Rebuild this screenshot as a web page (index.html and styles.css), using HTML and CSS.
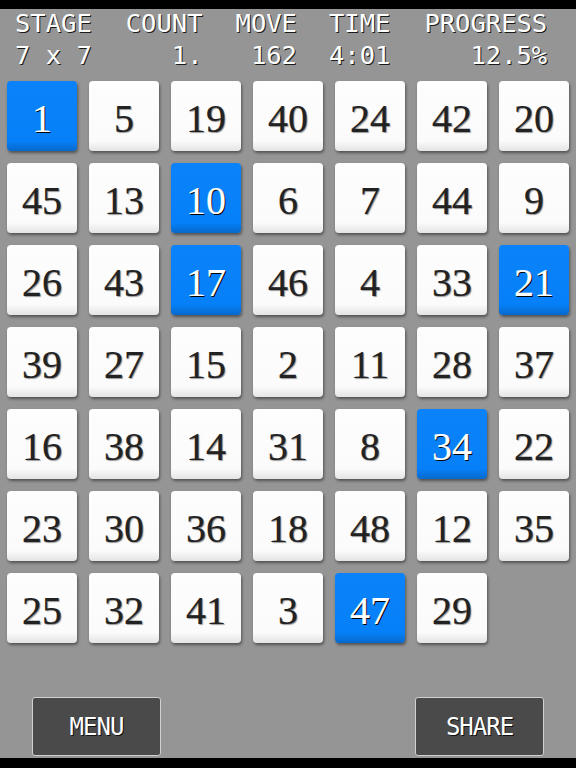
FILE: index.html
```html
<!DOCTYPE html>
<html>
<head>
<meta charset="utf-8">
<link rel="stylesheet" href="styles.css">
</head>
<body>
<div class="screen">
  <div class="topbar"></div>
  <div class="stats">
    <div class="stat"><div class="label">STAGE</div><div class="value left">7 x 7</div></div>
    <div class="stat c2"><div class="label">COUNT</div><div class="value">1.</div></div>
    <div class="stat c3"><div class="label">MOVE</div><div class="value">162</div></div>
    <div class="stat c4"><div class="label">TIME</div><div class="value">4:01</div></div>
    <div class="stat c5"><div class="label">PROGRESS</div><div class="value">12.5%</div></div>
  </div>
  <div class="board">
    <div class="tile on">1</div><div class="tile">5</div><div class="tile">19</div><div class="tile">40</div><div class="tile">24</div><div class="tile">42</div><div class="tile">20</div>
    <div class="tile">45</div><div class="tile">13</div><div class="tile on">10</div><div class="tile">6</div><div class="tile">7</div><div class="tile">44</div><div class="tile">9</div>
    <div class="tile">26</div><div class="tile">43</div><div class="tile on">17</div><div class="tile">46</div><div class="tile">4</div><div class="tile">33</div><div class="tile on">21</div>
    <div class="tile">39</div><div class="tile">27</div><div class="tile">15</div><div class="tile">2</div><div class="tile">11</div><div class="tile">28</div><div class="tile">37</div>
    <div class="tile">16</div><div class="tile">38</div><div class="tile">14</div><div class="tile">31</div><div class="tile">8</div><div class="tile on">34</div><div class="tile">22</div>
    <div class="tile">23</div><div class="tile">30</div><div class="tile">36</div><div class="tile">18</div><div class="tile">48</div><div class="tile">12</div><div class="tile">35</div>
    <div class="tile">25</div><div class="tile">32</div><div class="tile">41</div><div class="tile">3</div><div class="tile on">47</div><div class="tile">29</div>
  </div>
  <div class="spacer"></div>
  <div class="buttons">
    <div class="btn">MENU</div>
    <div class="btn">SHARE</div>
  </div>
  <div class="bottombar"></div>
</div>
</body>
</html>
```

FILE: styles.css
```css
html, body {
  margin: 0;
  padding: 0;
}
body {
  background: #959595;
}
.screen {
  width: 576px;
  height: 768px;
  display: flex;
  flex-direction: column;
  background: #959595;
  overflow: hidden;
}
.topbar {
  height: 9px;
  background: #000;
  flex: none;
}
.bottombar {
  height: 10px;
  background: #000;
  flex: none;
}
.stats {
  display: flex;
  padding: 0 0 0 15px;
  height: 72px;
  box-sizing: border-box;
  font-family: "DejaVu Sans Mono", monospace;
  font-size: 25.5px;
  line-height: 28px;
  color: #fff;
  text-shadow: 1px 1px 0 #1a1a1a;
  flex: none;
}
.stat .label,
.stat .value {
  white-space: pre;
  display: block;
}
.stat .value {
  text-align: right;
  margin-top: 4px;
}
.stat .value.left {
  text-align: left;
}
.c2 { margin-left: 34px; }
.c3 { margin-left: 33px; }
.c4 { margin-left: 32px; }
.c5 { margin-left: 34px; }

.board {
  display: grid;
  grid-template-columns: repeat(7, 70px);
  grid-auto-rows: 70px;
  gap: 12px;
  padding: 0 0 0 7px;
  flex: none;
}
.tile {
  border-radius: 4px;
  background: linear-gradient(#fdfdfd 0%, #fbfbfb 85%, #e4e4e4 100%);
  box-shadow: 1px 2px 3px rgba(0, 0, 0, 0.45);
  display: flex;
  align-items: center;
  justify-content: center;
  font-family: "Liberation Serif", "Times New Roman", serif;
  font-size: 40px;
  padding-top: 4px;
  box-sizing: border-box;
  color: #222;
  -webkit-text-stroke: 0.2px #222;
  text-shadow: 1px 1px 1px rgba(0, 0, 0, 0.4);
}
.tile.on {
  background: linear-gradient(#0a82fa 0%, #0680f8 85%, #0669cc 100%);
  color: #fff;
  -webkit-text-stroke: 0.2px #fff;
  text-shadow: 1px 1px 0 #000;
}
.spacer {
  flex: 1;
}
.buttons {
  display: flex;
  justify-content: space-between;
  padding: 0 32px 2px 32px;
  flex: none;
}
.btn {
  width: 129px;
  height: 59px;
  box-sizing: border-box;
  background: #4a4a4a;
  border: 1px solid #d0d0d0;
  border-radius: 3px;
  display: flex;
  align-items: center;
  justify-content: center;
  font-family: "DejaVu Sans Mono", monospace;
  font-size: 24px;
  color: #fff;
  text-shadow: 1px 1px 0 #111;
  letter-spacing: -1px;
}
```
